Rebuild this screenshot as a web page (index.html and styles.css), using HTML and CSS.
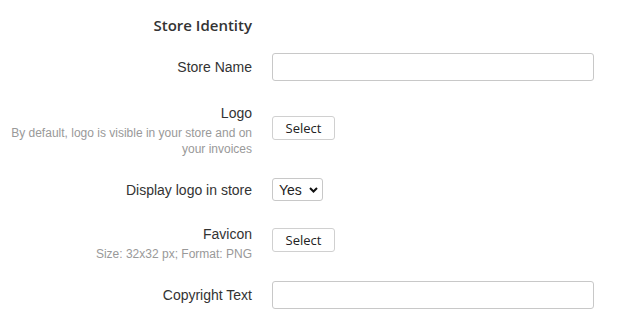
FILE: index.html
```html
<!DOCTYPE html>
<html lang="en">
  <head>
    <meta charset="UTF-8" />
    <title>Store Settings</title>
    <link rel="stylesheet" href="styles.css">
  </head>
  <body>
    <div class="settings">
      <h3 class="section_title">Store Identity</h3>

      <div class="row">
        <label class="row_label">Store Name</label>
        <input type="text" class="text_input" />
      </div>

      <div class="row row_tall logo_row">
        <div class="row_label">
          <label>Logo</label>
          <span class="hint">By default, logo is visible in your store and on your invoices</span>
        </div>
        <button class="select_button">Select</button>
      </div>

      <div class="row display_row">
        <label class="row_label">Display logo in store</label>
        <span class="select_wrap">
          <select class="yes_no">
            <option>Yes</option>
            <option>No</option>
          </select>
          <svg class="chevron" width="9" height="6" viewBox="0 0 9 6">
            <path d="M1 1 L4.5 4.5 L8 1" fill="none" stroke="#111" stroke-width="2" />
          </svg>
        </span>
      </div>

      <div class="row row_tall favicon_row">
        <div class="row_label">
          <label>Favicon</label>
          <span class="hint">Size: 32x32 px; Format: PNG</span>
        </div>
        <button class="select_button">Select</button>
      </div>

      <div class="row">
        <label class="row_label">Copyright Text</label>
        <input type="text" class="text_input" />
      </div>
    </div>
  </body>
</html>
```

FILE: styles.css
```css
body {
  margin: 0;
  background: #fff;
  font-family: "Liberation Sans", Arial, sans-serif;
  color: #333;
}
.settings {
  padding-top: 14px;
}
.section_title {
  width: 252px;
  margin: 0 0 17px;
  text-align: right;
  font-family: "Open Sans", sans-serif;
  font-weight: 600;
  font-size: 15px;
  line-height: 22px;
  color: #333;
}
.row {
  display: flex;
  align-items: center;
  margin-bottom: 23px;
}
.row_tall {
  align-items: flex-start;
}
.logo_row {
  margin-bottom: 21px;
}
.logo_row .select_button {
  margin-top: 12px;
}
.display_row {
  margin-bottom: 24px;
}
.favicon_row {
  margin-bottom: 19px;
}
.favicon_row .select_button {
  margin-top: 3px;
}
.row_label {
  width: 252px;
  margin-right: 20px;
  text-align: right;
  font-size: 14px;
  line-height: 18px;
  color: #333;
}
.row_label label {
  display: block;
}
.hint {
  display: block;
  margin-top: 3px;
  font-size: 12px;
  line-height: 16px;
  color: #999;
}
.text_input {
  box-sizing: border-box;
  width: 322px;
  height: 28px;
  border: 1px solid #c8c8c8;
  border-radius: 3px;
  padding: 0 8px;
  font-size: 14px;
  outline: 0;
}
.select_button {
  box-sizing: border-box;
  width: 63px;
  height: 24px;
  background: #fff;
  border: 1px solid #d0d0d0;
  border-radius: 3px;
  font-family: "Open Sans", sans-serif;
  font-size: 13px;
  color: #222;
  padding: 0;
  cursor: pointer;
}
.select_wrap {
  position: relative;
  display: inline-block;
}
.yes_no {
  -webkit-appearance: none;
  appearance: none;
  box-sizing: border-box;
  width: 51px;
  height: 23px;
  padding: 0 0 0 6px;
  border: 1px solid #c8c8c8;
  border-radius: 3px;
  background: #fff;
  font-family: "Liberation Sans", Arial, sans-serif;
  font-size: 14px;
  color: #222;
  outline: 0;
}
.chevron {
  position: absolute;
  right: 5px;
  top: 9px;
  pointer-events: none;
}
```
